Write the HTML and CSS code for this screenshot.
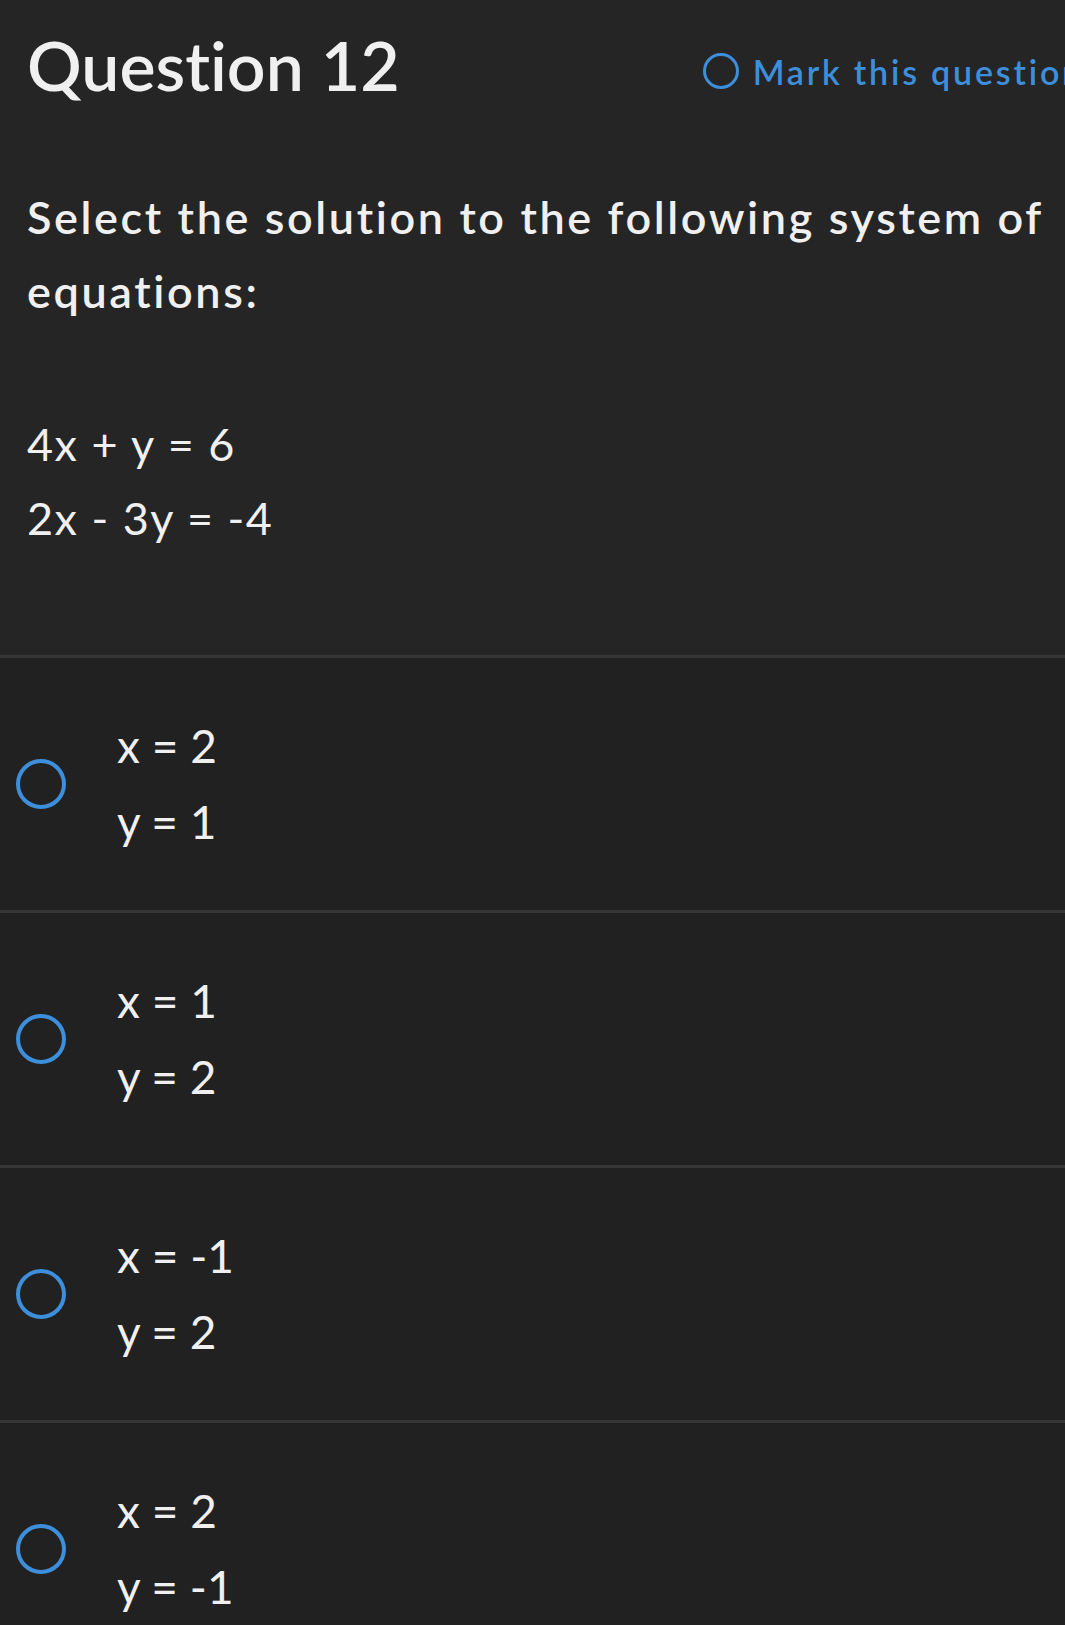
FILE: index.html
```html
<!DOCTYPE html>
<html lang="en">
<head>
    <meta charset="UTF-8">
    <meta name="viewport" content="width=device-width, initial-scale=1.0">
    <title>Question 12</title>
    <link rel="stylesheet" href="styles.css">
</head>
<body>
    <div class="question">
        <div class="question-header">
            <div class="question-title">Question 12</div>
            <div class="mark-question">
                <span class="mark-circle"></span>
                <span class="mark-label">Mark this question</span>
            </div>
        </div>
        <div class="question-prompt">Select the solution to the following system of equations:</div>
        <div class="equations">
            <div>4x + y = 6</div>
            <div>2x - 3y = -4</div>
        </div>
    </div>

    <div class="answers">
        <div class="answer">
            <span class="radio"></span>
            <div class="answer-text">
                <div>x = 2</div>
                <div>y = 1</div>
            </div>
        </div>
        <div class="answer">
            <span class="radio"></span>
            <div class="answer-text">
                <div>x = 1</div>
                <div>y = 2</div>
            </div>
        </div>
        <div class="answer">
            <span class="radio"></span>
            <div class="answer-text">
                <div>x = -1</div>
                <div>y = 2</div>
            </div>
        </div>
        <div class="answer">
            <span class="radio"></span>
            <div class="answer-text">
                <div>x = 2</div>
                <div>y = -1</div>
            </div>
        </div>
    </div>
</body>
</html>
```

FILE: styles.css
```css
body {
    margin: 0;
    padding: 0;
    background-color: #212121;
    color: #f0f0f0;
    font-family: Lato, "Open Sans", sans-serif;
    font-variant-ligatures: none;
    overflow: hidden;
}

.question {
    background-color: #252525;
    padding: 25px 0 100px 27px;
    border-bottom: 3px solid #363636;
}

.question-header {
    display: flex;
    align-items: center;
    white-space: nowrap;
}

.question-title {
    font-size: 68px;
    line-height: 80px;
    font-weight: 600;
    flex: 0 0 auto;
}

.mark-question {
    display: flex;
    align-items: center;
    margin-left: 303px;
    margin-top: 12px;
    color: #3d8fdb;
    flex: 0 0 auto;
}

.mark-circle {
    width: 36px;
    height: 36px;
    border: 3px solid #3d8fdb;
    border-radius: 50%;
    box-sizing: border-box;
}

.mark-label {
    margin-left: 14px;
    font-size: 34px;
    font-weight: 600;
    letter-spacing: 2.8px;
}

.question-prompt {
    margin-top: 75px;
    font-size: 45px;
    line-height: 74px;
    font-weight: 600;
    letter-spacing: 2.6px;
}

.equations {
    margin-top: 79px;
    font-size: 45px;
    line-height: 74px;
    letter-spacing: 1.5px;
}

.answer {
    display: flex;
    align-items: center;
    height: 252px;
    padding-left: 16px;
    border-bottom: 3px solid #363636;
}

.radio {
    width: 50px;
    height: 50px;
    border: 4px solid #3d8fdb;
    border-radius: 50%;
    box-sizing: border-box;
    flex: 0 0 auto;
}

.answer-text {
    margin-left: 51px;
    font-size: 46px;
    line-height: 76px;
}
```
